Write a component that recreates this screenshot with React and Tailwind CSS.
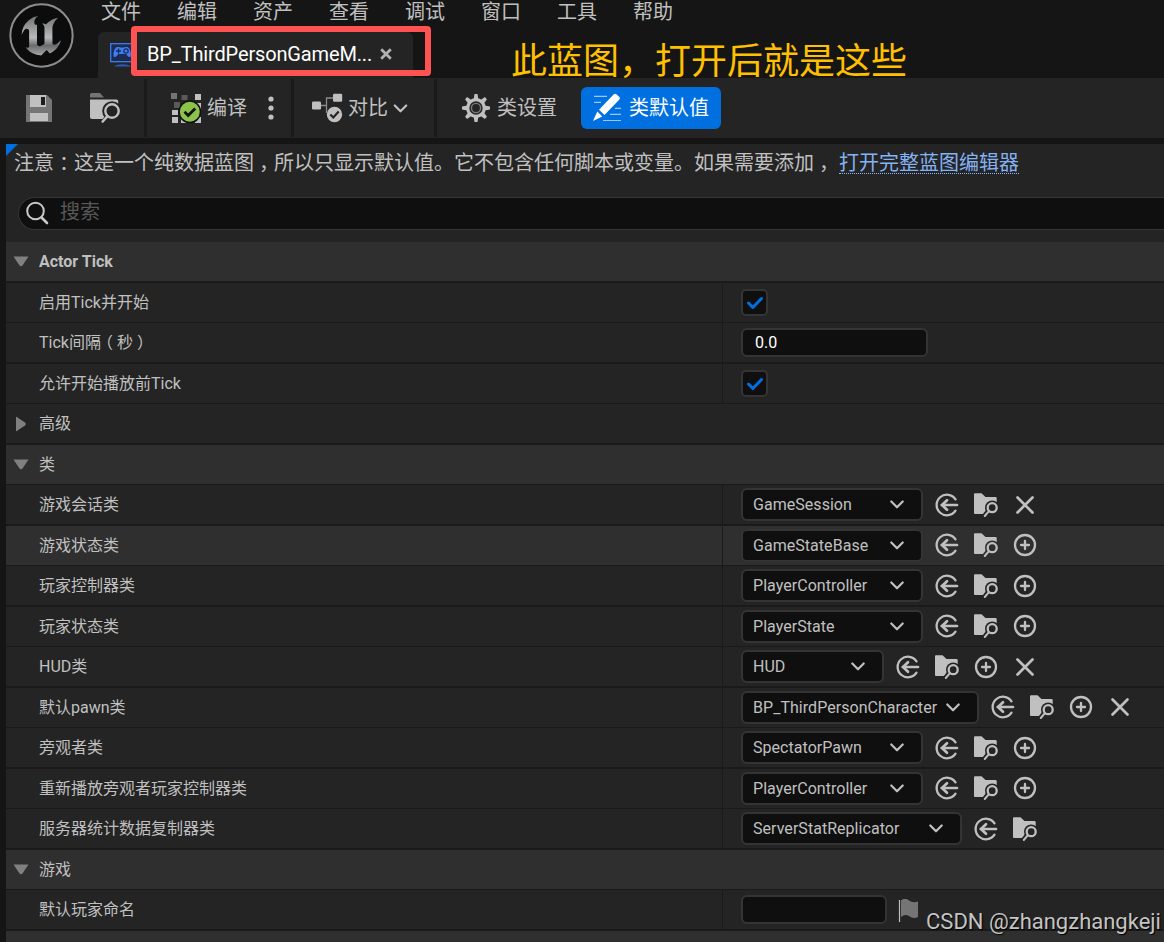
const FONT = 'font-["Roboto","Noto_Sans_CJK_SC",sans-serif]';

const MENU = ['文件', '编辑', '资产', '查看', '调试', '窗口', '工具', '帮助'];

// half-width alternates, padded so the mark sits in the middle of a full cell
function Mid({ children }) {
    return <span className="px-[0.25em] [font-feature-settings:'halt']">{children}</span>;
}

const ROWS = [
    { type: 'header', label: 'Actor Tick', bold: true },
    { type: 'check', label: '启用Tick并开始' },
    { type: 'input', label: <>Tick间隔<Mid>（</Mid>秒<Mid>）</Mid></>, value: '0.0', width: 187 },
    { type: 'check', label: '允许开始播放前Tick' },
    { type: 'group', label: '高级' },
    { type: 'header', label: '类' },
    { type: 'select', label: '游戏会话类', value: 'GameSession', width: 182, actions: ['use', 'browse', 'clear'] },
    { type: 'select', label: '游戏状态类', value: 'GameStateBase', width: 182, actions: ['use', 'browse', 'add'], active: true },
    { type: 'select', label: '玩家控制器类', value: 'PlayerController', width: 182, actions: ['use', 'browse', 'add'] },
    { type: 'select', label: '玩家状态类', value: 'PlayerState', width: 182, actions: ['use', 'browse', 'add'] },
    { type: 'select', label: 'HUD类', value: 'HUD', width: 143, actions: ['use', 'browse', 'add', 'clear'] },
    { type: 'select', label: '默认pawn类', value: 'BP_ThirdPersonCharacter', width: 238, actions: ['use', 'browse', 'add', 'clear'] },
    { type: 'select', label: '旁观者类', value: 'SpectatorPawn', width: 182, actions: ['use', 'browse', 'add'] },
    { type: 'select', label: '重新播放旁观者玩家控制器类', value: 'PlayerController', width: 182, actions: ['use', 'browse', 'add'] },
    { type: 'select', label: '服务器统计数据复制器类', value: 'ServerStatReplicator', width: 221, actions: ['use', 'browse'] },
    { type: 'header', label: '游戏' },
    { type: 'input', label: '默认玩家命名', value: '', width: 146, flag: true },
    { type: 'header', label: '' },
];

function UnrealLogo() {
    return (
        <svg className="absolute top-[3px] left-[9px]" width="65" height="65" viewBox="0 0 24 24">
            <defs>
                <linearGradient id="metal" x1="0" y1="0" x2="0" y2="1">
                    <stop offset="0" stopColor="#6f7173" />
                    <stop offset="0.55" stopColor="#b9babb" />
                    <stop offset="0.75" stopColor="#6a6c6e" />
                    <stop offset="1" stopColor="#a5a6a7" />
                </linearGradient>
            </defs>
            <circle cx="12" cy="12" r="11.5" fill="#0c0c0c" stroke="#8b8d8e" strokeWidth="0.75" />
            <path
                fill="url(#metal)"
                d="M19.13 13.729c-.206.997-1.126 3.557-4.06 4.942l-1.179-1.325-1.988 2a7.338 7.338 0 0 1-5.804-2.978 2.859 2.859 0 0 0 .65.123c.326.006.678-.114.678-.66v-5.394a.89.89 0 0 0-1.116-.89c-.92.212-1.656 2.509-1.656 2.509a7.304 7.304 0 0 1 2.528-5.597 7.408 7.408 0 0 1 3.73-1.721c-1.006.573-1.57 1.507-1.57 2.29 0 1.262.76 1.109.984.923v7.28a1.157 1.157 0 0 0 .148.256 1.075 1.075 0 0 0 .88.445c.76 0 1.747-.868 1.747-.868V9.172c0-.6-.452-1.324-.905-1.572 0 0 .838-.149 1.484.346a5.537 5.537 0 0 1 .387-.425c1.508-1.48 2.929-1.902 4.112-2.112 0 0-2.151 1.69-2.151 3.96 0 1.687.043 5.801.043 5.801.799.771 1.986-.342 3.059-1.441Z"
            />
        </svg>
    );
}

function GameModeIcon() {
    return (
        <svg width="27" height="27" viewBox="0 0 27 27" className="shrink-0">
            <rect x="0.7" y="1.7" width="24" height="18" fill="#1b2c4e" stroke="#3d7cf4" strokeWidth="1.3" />
            <path d="M6.5 5.2c2-.8 3.2.4 5.7.4s3.7-1.2 5.7-.4c2 .8 3.2 5.3 3 8.2-.1 2-2 2-3.2.6l-1.7-2H8.4l-1.7 2C5.5 15.4 3.6 15.4 3.5 13.4c-.2-2.9 1-7.4 3-8.2Z" fill="#3d7cf4" />
            <path d="M6 9h5M8.5 6.5v5" stroke="#1b2c4e" strokeWidth="1.3" />
            <circle cx="16" cy="9" r="2.2" fill="none" stroke="#1b2c4e" strokeWidth="1.2" />
            <path d="M4 24.5C7 21.5 18 21.5 21 24.5Z" fill="#2c59b4" />
        </svg>
    );
}

function SaveIcon() {
    return (
        <svg width="26" height="27" viewBox="0 0 26 27">
            <path d="M0 0h21l5 5v22H0Z" fill="#757575" />
            <path d="M4 0h16v12H4Z" fill="#c0c0c0" />
            <path d="M15 2h4v8h-4Z" fill="#1c1c1c" />
            <path d="M4 18h18v8H4Z" fill="#c0c0c0" />
        </svg>
    );
}

function BrowseLargeIcon() {
    return (
        <svg width="30" height="30" viewBox="0 0 30 30">
            <path d="M0 1.5Q0 0 1.5 0H10l4 4.5H0Z" fill="#757575" />
            <path d="M0 6.5h26.5q1.7 0 1.7 2V26H2q-2 0-2-2Z" fill="#c0c0c0" />
            <circle cx="22" cy="18" r="9.8" fill="#242424" />
            <path d="M16 22l-6 7h19V18Z" fill="#242424" />
            <circle cx="22" cy="18" r="6.7" fill="none" stroke="#c0c0c0" strokeWidth="2.4" />
            <path d="M17.5 23.2l-4.8 5.3" stroke="#c0c0c0" strokeWidth="2.6" strokeLinecap="round" />
        </svg>
    );
}

function CompileIcon() {
    return (
        <svg width="31" height="31" viewBox="0 0 31 31">
            <path d="M0 0h6v6H0Z" fill="#757575" />
            <path d="M10.5 2h6v5h-6ZM3 9h6v6H3Z" fill="#5a5a5a" />
            <path d="M24 1h6v6h-6ZM24 10h6v6h-6ZM1 17h6v5H1ZM1 24h6v6H1ZM24 24h6v6h-6ZM10 25h6v5h-6Z" fill="#c0c0c0" />
            <circle cx="18.8" cy="18.8" r="10.7" fill="#8bc24a" stroke="#111" strokeWidth="1.5" />
            <path d="M13.5 18.8l3.7 3.7 7-7" fill="none" stroke="#111" strokeWidth="2.8" />
        </svg>
    );
}

function DiffIcon() {
    return (
        <svg width="31" height="30" viewBox="0 0 31 30">
            <path d="M8 12.5h6.5M14.5 20V5h8" fill="none" stroke="#8a8a8a" strokeWidth="1.3" />
            <rect x="0" y="8.5" width="9" height="8" rx="1.3" fill="#c0c0c0" />
            <rect x="21" y="0.7" width="9.2" height="8" rx="1.3" fill="#c0c0c0" />
            <circle cx="22.5" cy="21.5" r="7.7" fill="#c0c0c0" />
            <path d="M18.3 21.5l3 3 5.4-6" fill="none" stroke="#242424" strokeWidth="2.2" />
        </svg>
    );
}

function GearIcon() {
    return (
        <svg width="28" height="28" viewBox="0 0 28 28">
            <g fill="#c0c0c0">
                {[0, 45, 90, 135, 180, 225, 270, 315].map((a) => (
                    <path key={a} d="M11.6 5.5l.9-5.5h3l.9 5.5Z" transform={`rotate(${a} 14 14)`} />
                ))}
            </g>
            <circle cx="14" cy="14" r="8.3" fill="#242424" stroke="#c0c0c0" strokeWidth="3.2" />
            <circle cx="14" cy="14" r="4.6" fill="none" stroke="#7a7a7a" strokeWidth="1.4" />
        </svg>
    );
}

function PencilIcon() {
    return (
        <svg width="30" height="30" viewBox="0 0 30 30">
            <path d="M2 3.3h13M2 9.3h7M23 15.3h6M18 21.3h11M11 27.5h18" stroke="#9cc6f5" strokeWidth="1.2" />
            <path d="M21.8 1.3q1.3-1.2 2.6 0l3 2.7q1.2 1.2 0 2.6L12.5 22 7 16.7Z" fill="#fff" />
            <path d="M5.3 18.6l5 4.8L1 28Z" fill="#fff" />
        </svg>
    );
}

function Chevron({ size = 14 }) {
    return (
        <svg width={size} height="9" viewBox="0 0 14 9" fill="none" stroke="#c0c0c0" strokeWidth="2.2" strokeLinecap="round" strokeLinejoin="round">
            <path d="M1.3 1.5L7 7.3l5.7-5.8" />
        </svg>
    );
}

function ActionIcon({ name, bg }) {
    return (
        <div className="flex w-[39px] justify-center">
            <svg width="27" height="27" viewBox="0 0 27 27" fill="none" stroke="#c0c0c0" strokeWidth="2.3" strokeLinecap="round">
                {name === 'use' && (
                    <>
                        <path d="M22.5 8.3A10.3 10.3 0 1 0 22.5 19.7" />
                        <path d="M24 14H9" strokeWidth="2.7" />
                        <path d="M14 9.2L9 14l5 4.8" strokeWidth="2.7" />
                    </>
                )}
                {name === 'browse' && (
                    <>
                        <path d="M2 3.3q0-1 1-1h6.5L13.5 6H23.5q1.2 0 1.2 1.2V23H3q-1 0-1-1Z" fill="#c0c0c0" stroke="none" />
                        <circle cx="20.2" cy="16.7" r="7.2" fill={bg} stroke="none" />
                        <path d="M15 18l-5 6v3h17V16Z" fill={bg} stroke="none" />
                        <circle cx="20.2" cy="16.7" r="4.5" />
                        <path d="M16.5 20.7L12.8 25" strokeWidth="2" />
                    </>
                )}
                {name === 'add' && (
                    <>
                        <circle cx="14" cy="14" r="10" />
                        <path d="M14 10v8M10 14h8" />
                    </>
                )}
                {name === 'clear' && <path d="M6.5 6.5l15 15M21.5 6.5l-15 15" strokeWidth="2.7" />}
            </svg>
        </div>
    );
}

function RowValue({ row, bg, odd }) {
    if (row.type === 'check') {
        return (
            <div className="flex size-[27px] items-center justify-center rounded-[5px] border-2 border-[#343434] bg-[#0f0f0f]">
                <svg width="17" height="13" viewBox="0 0 17 13" fill="none" stroke="#0070e0" strokeWidth="3" strokeLinecap="round" strokeLinejoin="round">
                    <path d="M2.5 7l4.3 4.5L15.5 2.5" />
                </svg>
            </div>
        );
    }
    if (row.type === 'input') {
        return (
            <>
                <div className="flex h-[29px] items-center rounded-[6px] border-2 border-[#343434] bg-[#0f0f0f] pl-[12px] text-base text-white" style={{ width: row.width }}>
                    {row.value}
                </div>
                {row.flag && (
                    <svg className="mt-[2px] ml-[11px]" width="22" height="24" viewBox="0 0 22 24">
                        <path d="M1.5 1v22" stroke="#c0c0c0" strokeWidth="1.2" />
                        <path d="M3 1.5q4-3.5 8 0 4 3 9 1V18q-5 2.5-9-1-4-2.5-8 1Z" fill="#757575" />
                    </svg>
                )}
            </>
        );
    }
    return (
        <>
            <div className="flex h-[33px] items-center justify-between rounded-[6px] border-2 border-[#343434] bg-[#0f0f0f] pr-[17px] pl-[10px]" style={{ width: row.width }}>
                <span className="text-base tracking-[0.04px]">{row.value}</span>
                <Chevron />
            </div>
            <div className={odd ? 'ml-1 flex pb-[2px]' : 'ml-1 flex'}>
                {row.actions.map((name) => <ActionIcon key={name} name={name} bg={bg} />)}
            </div>
        </>
    );
}

function PropertyRow({ row, index }) {
    const light = row.type === 'header' || row.active;
    const bg = light ? '#2f2f2f' : '#242424';
    const odd = index % 2 === 1;
    const hasValue = row.type !== 'header' && row.type !== 'group';
    return (
        <div className={`flex shrink-0 border-[#1a1a1a] ${odd ? 'h-[40px] border-b' : 'h-[41px] border-b-2'} ${light ? 'bg-[#2f2f2f]' : 'bg-[#242424]'}`}>
            <div className={`flex items-center ${hasValue ? 'w-[717px] border-r border-[#1a1a1a]' : 'flex-1'}`}>
                <div className="flex w-[33px] pl-[7px]">
                    {row.type === 'header' && (
                        <svg width="16" height="11" viewBox="0 0 16 11"><path d="M.5 0.5h15L9.5 9.5Q8 11 6.5 9.5Z" fill="#808080" /></svg>
                    )}
                    {row.type === 'group' && (
                        <svg className="ml-[3px]" width="10" height="16" viewBox="0 0 10 16"><path d="M0 .5L9 6.5Q10.5 8 9 9.5L0 15.5Z" fill="#808080" /></svg>
                    )}
                </div>
                <span className={row.bold ? 'text-base font-bold' : 'text-base'}>{row.label}</span>
            </div>
            {hasValue && (
                <div className="flex flex-1 items-center pl-[18px]">
                    <RowValue row={row} bg={bg} odd={odd} />
                </div>
            )}
        </div>
    );
}

export default function App() {
    return (
        <div className={`relative flex h-[942px] w-[1164px] flex-col overflow-hidden bg-[#151515] text-[#c0c0c0] ${FONT}`}>
            {/* Title bar */}
            <div className="flex h-[78px] shrink-0 flex-col justify-between pl-[98px]">
                <div className="flex h-[24px] items-center gap-9 pl-[3px] text-xl leading-[24px]">
                    {MENU.map((m) => <span key={m}>{m}</span>)}
                </div>
                <div className="flex h-[46px] w-[315px] items-center rounded-t-[6px] bg-[#242424] pl-[12px]">
                    <GameModeIcon />
                    <span className="ml-[10px] pb-[2px] text-xl tracking-[-0.15px] text-white">BP_ThirdPersonGameM...</span>
                    <svg className="mb-[2px] ml-[8px]" width="12" height="12" viewBox="0 0 12 12" stroke="#b0b0b0" strokeWidth="2.8">
                        <path d="M1.2 1.2l9.6 9.6M10.8 1.2l-9.6 9.6" />
                    </svg>
                </div>
            </div>
            <UnrealLogo />

            {/* Toolbar */}
            <div className="flex h-[60px] shrink-0 items-center bg-[#242424] text-xl">
                <div className="flex h-[58px] w-[147px] items-center gap-[38px] border-r-[3px] border-[#1a1a1a] pl-[26px]">
                    <SaveIcon />
                    <BrowseLargeIcon />
                </div>
                <div className="flex h-[58px] w-[147px] items-center border-r-[3px] border-[#1a1a1a] pl-[24px]">
                    <CompileIcon />
                    <span className="ml-[5px]">编译</span>
                    <svg className="ml-[21px]" width="6" height="24" viewBox="0 0 6 24" fill="#c0c0c0">
                        <circle cx="3" cy="3" r="2.6" /><circle cx="3" cy="12" r="2.6" /><circle cx="3" cy="21" r="2.6" />
                    </svg>
                </div>
                <div className="flex h-[58px] w-[143px] items-center border-r-[3px] border-[#1a1a1a] pl-[18px]">
                    <DiffIcon />
                    <span className="mr-[5px] ml-[5px]">对比</span>
                    <Chevron size={15} />
                </div>
                <div className="flex items-center gap-[7px] pl-[25px]">
                    <GearIcon />
                    <span>类设置</span>
                </div>
                <div className="ml-[24px] flex h-[42px] w-[140px] items-center rounded-[6px] bg-[#0070e0] pl-[11px] text-white">
                    <PencilIcon />
                    <span className="ml-[7px]">类默认值</span>
                </div>
            </div>

            {/* Details panel */}
            <div className="mt-[6px] ml-[6px] flex flex-1 flex-col bg-[#242424]">
                <div className="relative flex h-[53px] items-start pt-[8px] pl-[8px] text-xl leading-[22px]">
                    <svg className="absolute top-0 left-0" width="12" height="12"><path d="M0 0h12L0 12Z" fill="#0070e0" /></svg>
                    <span className="whitespace-nowrap">
                        注意<Mid>：</Mid>这是一个纯数据蓝图<Mid>，</Mid>所以只显示默认值。它不包含任何脚本或变量。如果需要添加<Mid>，</Mid>
                    </span>
                    <a className="ml-[5px] h-[22px] border-b border-dotted border-[#8ab8ff] text-[#85b2f2]">打开完整蓝图编辑器</a>
                </div>
                <div className="ml-[12px] flex h-[33px] items-center rounded-l-full border border-r-0 border-[#353535] bg-[#0f0f0f] pl-[6px]">
                    <svg className="mb-[2px]" width="24" height="24" viewBox="0 0 24 24" fill="none" stroke="#c8c8c8" strokeLinecap="round">
                        <circle cx="10.5" cy="10" r="8.3" strokeWidth="2" />
                        <path d="M16.5 16.5l5.5 5.5" strokeWidth="2.6" />
                    </svg>
                    <span className="ml-[11px] pb-[3px] text-xl text-[#575757]">搜索</span>
                </div>
                <div className="mt-[12px] flex flex-col">
                    {ROWS.map((row, i) => <PropertyRow key={i} row={row} index={i} />)}
                </div>
            </div>

            {/* Annotations over the editor */}
            <div className="absolute top-[26px] left-[131px] h-[50px] w-[300px] rounded-[4px] border-[6px] border-[#ff5252]" />
            <div className='absolute top-[32px] left-[511px] font-["Noto_Sans_CJK_SC",sans-serif] text-[36px] leading-[52px] whitespace-nowrap text-[#ffc000]'>此蓝图，打开后就是这些</div>
            <div className="absolute top-[907px] left-[926px] text-[22px] leading-[30px] whitespace-nowrap text-[#c4c4c4] [text-shadow:1px_1px_1px_#000]">CSDN @zhangzhangkeji</div>
        </div>
    );
}
